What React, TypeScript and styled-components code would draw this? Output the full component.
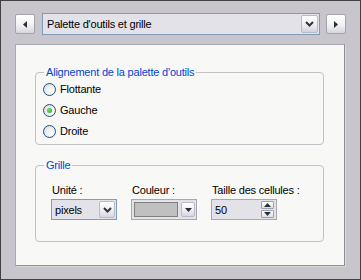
import * as React from 'react';
import styled, { createGlobalStyle } from 'styled-components';

const GlobalStyle = createGlobalStyle`
    html, body {
        margin: 0;
        padding: 0;
        background: #c8c6cc;
    }
    * {
        box-sizing: border-box;
    }
`

const Frame = styled.div`
    width: 361px;
    height: 280px;
    border: 1px solid #404040;
    background: #c8c6cc;
    padding: 12px 0 0 14px;
    font-family: "Liberation Sans", Arial, sans-serif;
    font-size: 11px;
    letter-spacing: -0.2px;
    color: #000;
`

const Toolbar = styled.div`
    display: flex;
    align-items: center;
    height: 22px;
`

const NavButton = styled.button`
    width: 20px;
    height: 20px;
    padding: 0;
    border: 1px solid #a3a3ad;
    border-radius: 2px;
    background: linear-gradient(#ffffff, #f2f2f4 55%, #d6d6de);
    display: flex;
    align-items: center;
    justify-content: center;
    margin-right: ${(p: { $gap?: number }) => p.$gap ?? 0}px;
`

const Combo = styled.div`
    width: 278px;
    height: 22px;
    border: 1px solid #7f9db9;
    background: #e3e2e8;
    display: flex;
    align-items: center;
    margin-right: 6px;
`

const ComboText = styled.div`
    flex: 1;
    padding-left: 4px;
    font-size: 11px;
    white-space: nowrap;
`

const DropButton = styled.div`
    width: 17px;
    height: 18px;
    margin-right: 1px;
    border: 1px solid #b6bccc;
    border-radius: 2px;
    background: linear-gradient(#ffffff, #ebebef 60%, #d2d2da);
    display: flex;
    align-items: center;
    justify-content: center;
`

const Panel = styled.div`
    margin-top: 9px;
    width: 330px;
    height: 222px;
    background: #f8f8f6;
    border: 1px solid #a9aab2;
    border-right-color: #8d9196;
    border-bottom-color: #8d9196;
    box-shadow: 1px 1px 0 #d8d9d2;
    padding: 21px 0 0 19px;
`

const Group = styled.fieldset`
    width: 289px;
    margin: 0 0 ${(p: { $mb?: number }) => p.$mb ?? 0}px 0;
    padding: 0 8px ${(p: { $pb?: number; $mb?: number }) => p.$pb ?? 0}px 8px;
    border: 1px solid #c4c0c8;
    border-radius: 4px;
    min-inline-size: 0;
`

const Legend = styled.legend`
    padding: 0 2px;
    color: #0046d5;
    font-size: 11px;
    line-height: 13px;
`

const RadioRow = styled.label`
    display: flex;
    align-items: center;
    height: 20px;
    margin: 0 0 1px -1px;
    gap: 4px;
`

const RadioDot = styled.span<{ $on?: boolean }>`
    width: 13px;
    height: 13px;
    border-radius: 50%;
    border: 1px solid #1c5180;
    background: radial-gradient(circle at 65% 65%, #ffffff 0%, #f1f1ef 40%, #d4d4cf 100%);
    display: flex;
    align-items: center;
    justify-content: center;
    &::after {
        content: '';
        display: ${p => (p.$on ? 'block' : 'none')};
        width: 5px;
        height: 5px;
        border-radius: 50%;
        background: radial-gradient(circle at 40% 40%, #6ee46e, #21a121);
    }
`

const FieldGrid = styled.div`
    display: grid;
    grid-template-columns: 66px 66px 66px;
    column-gap: 14px;
    padding-left: 7px;
    margin-top: 11px;
`

const FieldLabel = styled.div`
    height: 14px;
    line-height: 14px;
    padding-left: 1px;
    margin-bottom: 2px;
    font-size: 11px;
    white-space: nowrap;
`

const SelectBox = styled.div<{ $border: string; $bg: string }>`
    height: 21px;
    border: 1px solid ${p => p.$border};
    background: ${p => p.$bg};
    display: flex;
    align-items: center;
`

const SelectText = styled.div`
    flex: 1;
    padding-left: 3px;
`

const SmallDrop = styled.div<{ $w: number; $h: number }>`
    width: ${p => p.$w}px;
    height: ${p => p.$h}px;
    margin-right: 1px;
    border: 1px solid #b8bcc8;
    border-radius: 2px;
    background: linear-gradient(#ffffff, #ececf0 60%, #d6d6de);
    display: flex;
    align-items: center;
    justify-content: center;
`

const Swatch = styled.div`
    flex: 1;
    height: 15px;
    margin: 0 3px 0 2px;
    border: 1px solid #808080;
    background: #c0c0c0;
`

const SpinStack = styled.div`
    display: flex;
    flex-direction: column;
    gap: 1px;
    margin-right: 2px;
`

const SpinButton = styled.div`
    width: 13px;
    height: 8px;
    border: 1px solid #9aa0ac;
    border-radius: 1px;
    background: linear-gradient(#ffffff, #dedee4);
    display: flex;
    align-items: center;
    justify-content: center;
`

const Chevron = () => (
    <svg width="9" height="6" viewBox="0 0 9 6">
        <path d="M1 1 L4.5 4.5 L8 1" stroke="#30343c" strokeWidth="2" fill="none" />
    </svg>
)

const Tri = ({ dir }: { dir: 'left' | 'right' | 'up' | 'down' }) => {
    const d = {
        left: 'M4 0 L0 3.5 L4 7 Z',
        right: 'M0 0 L4 3.5 L0 7 Z',
        up: 'M0 4 L3.5 0 L7 4 Z',
        down: 'M0 0 L7 0 L3.5 4 Z',
    }[dir]
    const vertical = dir === 'left' || dir === 'right'
    return (
        <svg width={vertical ? 4 : 7} height={vertical ? 7 : 4} viewBox={vertical ? '0 0 4 7' : '0 0 7 4'}>
            <path d={d} fill="#2a2e36" />
        </svg>
    )
}

export default function App() {
    return (
        <Frame>
            <GlobalStyle />
            <Toolbar>
                <NavButton $gap={7}><Tri dir="left" /></NavButton>
                <Combo>
                    <ComboText>Palette d'outils et grille</ComboText>
                    <DropButton><Chevron /></DropButton>
                </Combo>
                <NavButton><Tri dir="right" /></NavButton>
            </Toolbar>
            <Panel>
                <Group $mb={14} $pb={2}>
                    <Legend>Alignement de la palette d'outils</Legend>
                    <RadioRow><RadioDot />Flottante</RadioRow>
                    <RadioRow><RadioDot $on />Gauche</RadioRow>
                    <RadioRow><RadioDot />Droite</RadioRow>
                </Group>
                <Group $pb={21}>
                    <Legend>Grille</Legend>
                    <FieldGrid>
                        <div>
                            <FieldLabel>Unité :</FieldLabel>
                            <SelectBox $border="#7f9db9" $bg="#e3e2e8">
                                <SelectText>pixels</SelectText>
                                <SmallDrop $w={16} $h={17}><Chevron /></SmallDrop>
                            </SelectBox>
                        </div>
                        <div>
                            <FieldLabel>Couleur :</FieldLabel>
                            <SelectBox $border="#a8a8b0" $bg="#e3e2e8">
                                <Swatch />
                                <SmallDrop $w={14} $h={15}><Tri dir="down" /></SmallDrop>
                            </SelectBox>
                        </div>
                        <div>
                            <FieldLabel>Taille des cellules :</FieldLabel>
                            <SelectBox $border="#a8a8b0" $bg="#e3e2e8">
                                <SelectText>50</SelectText>
                                <SpinStack>
                                    <SpinButton><Tri dir="up" /></SpinButton>
                                    <SpinButton><Tri dir="down" /></SpinButton>
                                </SpinStack>
                            </SelectBox>
                        </div>
                    </FieldGrid>
                </Group>
            </Panel>
        </Frame>
    )
}
